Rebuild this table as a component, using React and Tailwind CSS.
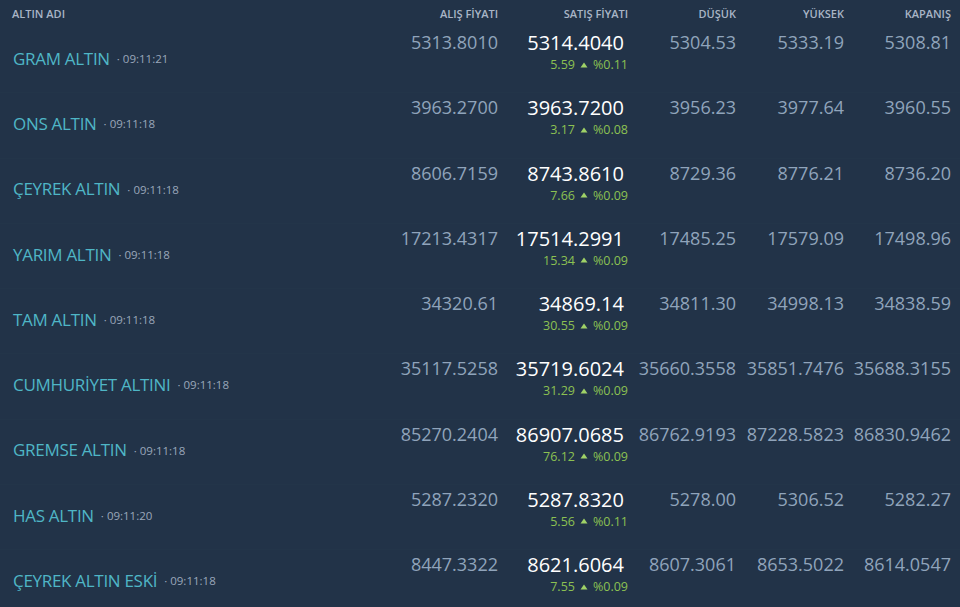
const rows = [
  { name: "GRAM ALTIN", time: "09:11:21", alis: "5313.8010", satis: "5314.4040", diff: "5.59", pct: "%0.11", low: "5304.53", high: "5333.19", close: "5308.81" },
  { name: "ONS ALTIN", time: "09:11:18", alis: "3963.2700", satis: "3963.7200", diff: "3.17", pct: "%0.08", low: "3956.23", high: "3977.64", close: "3960.55" },
  { name: "ÇEYREK ALTIN", time: "09:11:18", alis: "8606.7159", satis: "8743.8610", diff: "7.66", pct: "%0.09", low: "8729.36", high: "8776.21", close: "8736.20" },
  { name: "YARIM ALTIN", time: "09:11:18", alis: "17213.4317", satis: "17514.2991", diff: "15.34", pct: "%0.09", low: "17485.25", high: "17579.09", close: "17498.96" },
  { name: "TAM ALTIN", time: "09:11:18", alis: "34320.61", satis: "34869.14", diff: "30.55", pct: "%0.09", low: "34811.30", high: "34998.13", close: "34838.59" },
  { name: "CUMHURİYET ALTINI", time: "09:11:18", alis: "35117.5258", satis: "35719.6024", diff: "31.29", pct: "%0.09", low: "35660.3558", high: "35851.7476", close: "35688.3155" },
  { name: "GREMSE ALTIN", time: "09:11:18", alis: "85270.2404", satis: "86907.0685", diff: "76.12", pct: "%0.09", low: "86762.9193", high: "87228.5823", close: "86830.9462" },
  { name: "HAS ALTIN", time: "09:11:20", alis: "5287.2320", satis: "5287.8320", diff: "5.56", pct: "%0.11", low: "5278.00", high: "5306.52", close: "5282.27" },
  { name: "ÇEYREK ALTIN ESKİ", time: "09:11:18", alis: "8447.3322", satis: "8621.6064", diff: "7.55", pct: "%0.09", low: "8607.3061", high: "8653.5022", close: "8614.0547" },
];

const grid = "grid grid-cols-[1fr_118px_130px_108px_108px_107px] pr-[9px]";
const num = "text-right text-[18px] leading-[24px] pt-[2px] text-[#90a4bb]";

function Up() {
  return (
    <svg width="8" height="6" viewBox="0 0 8 6" className="mx-[5px] mb-[2px] inline-block">
      <path d="M4 0.5 L7.5 5.5 L0.5 5.5 Z" fill="#9fd267" />
    </svg>
  );
}

export default function App() {
  return (
    <div className="w-[960px] h-[607px] overflow-hidden bg-[#223348] font-['Open_Sans',sans-serif]">
      <div className={`${grid} h-[28px] items-center text-[11px] font-semibold text-[#a9b5c6]`}>
        <div className="pl-[12px]">ALTIN ADI</div>
        <div className="text-right">ALIŞ FİYATI</div>
        <div className="text-right">SATIŞ FİYATI</div>
        <div className="text-right">DÜŞÜK</div>
        <div className="text-right">YÜKSEK</div>
        <div className="text-right">KAPANIŞ</div>
      </div>
      {rows.map((r) => (
        <div key={r.name} className={`${grid} h-[65.25px] border-b border-[#233549]`}>
          <div className="flex items-center pl-[13px] pb-[3px]">
            <span className="text-[17px] tracking-[-0.3px] text-[#4fb6c6]">{r.name}</span>
            <span className="ml-[7px] text-[11.5px] text-[#9aa7ba]">· {r.time}</span>
          </div>
          <div className={num}>{r.alis}</div>
          <div className="text-right pt-[1px]">
            <div className="text-[20px] leading-[27px] text-white pr-[4px]">{r.satis}</div>
            <div className="text-[12.5px] leading-[17px] text-[#8cc152]">
              {r.diff}
              <Up />
              {r.pct}
            </div>
          </div>
          <div className={num}>{r.low}</div>
          <div className={num}>{r.high}</div>
          <div className={num}>{r.close}</div>
        </div>
      ))}
    </div>
  );
}
